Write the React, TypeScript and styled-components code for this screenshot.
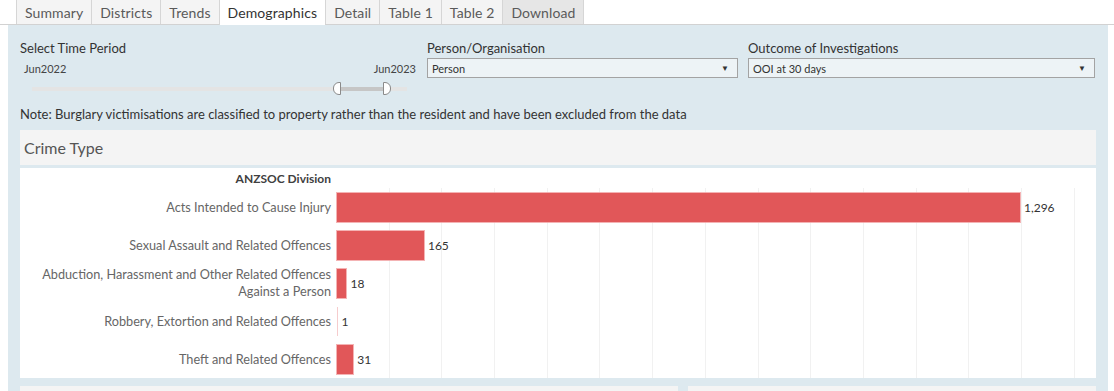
import React from "react";
import styled, { createGlobalStyle } from "styled-components";

const GlobalStyle = createGlobalStyle`
  body {
    margin: 0;
    background: #ffffff;
    font-family: Lato, "Noto Sans", sans-serif;
    overflow: hidden;
  }
`;

const Page = styled.div`
  width: 1114px;
  height: 391px;
  overflow: hidden;
`;

const TabBar = styled.div`
  display: flex;
  height: 24px;
  padding-left: 16px;
  border-bottom: 1px solid #d2d2d2;
`;

const Tab = styled.div<{ $active?: boolean; $dark?: boolean }>`
  display: flex;
  align-items: center;
  padding: 0 8px;
  height: ${(p) => (p.$active ? "25px" : "24px")};
  border-left: 1px solid #d6d6d6;
  border-right: ${(p) => (p.$dark ? "1px solid #d6d6d6" : "none")};
  background: ${(p) => (p.$active ? "#ffffff" : p.$dark ? "#e6e6e6" : "#f4f4f4")};
  color: ${(p) => (p.$active ? "#333333" : "#5a5a5a")};
  font-size: 14px;
  letter-spacing: 0.1px;
  box-sizing: border-box;
`;

const Dashboard = styled.div`
  margin-left: 8px;
  width: 1100px;
  height: 366px;
  box-sizing: border-box;
  padding: 15px 12px 0 12px;
  background: #dde9ef;
  display: flex;
  flex-direction: column;
`;

const Controls = styled.div`
  display: flex;
  height: 66px;
`;

const Control = styled.div<{ $width: number; $gap?: number }>`
  display: flex;
  flex-direction: column;
  width: ${(p) => p.$width}px;
  margin-left: ${(p) => p.$gap || 0}px;
`;

const Label = styled.div`
  font-size: 13px;
  line-height: 16px;
  color: #333333;
`;

const RangeLabels = styled.div`
  display: flex;
  justify-content: space-between;
  padding: 5px 0 0 4px;
  font-size: 11px;
  line-height: 16px;
  color: #444444;
`;

const Track = styled.div`
  display: flex;
  align-items: center;
  height: 13px;
  margin: 5px 0 0 12px;
  width: 375px;
`;

const TrackPart = styled.div<{ $selected?: boolean }>`
  height: 4px;
  background: ${(p) => (p.$selected ? "#c6c6c6" : "#e4e4e4")};
`;

const Handle = styled.div<{ $side: "left" | "right" }>`
  width: 8px;
  height: 13px;
  box-sizing: border-box;
  background: #ffffff;
  border: 1px solid #8a8a8a;
  border-radius: ${(p) => (p.$side === "left" ? "6px 0 0 6px" : "0 6px 6px 0")};
`;

const Select = styled.div`
  display: flex;
  align-items: center;
  justify-content: space-between;
  margin-top: 2px;
  height: 20px;
  box-sizing: border-box;
  border: 1px solid #a3a3a3;
  background: #edf3f6;
  padding: 0 8px 0 4px;
  font-size: 11px;
  color: #333333;
`;

const Arrow = styled.span`
  font-size: 8px;
  color: #333333;
`;

const Note = styled.div`
  font-size: 13px;
  line-height: 16px;
  color: #333333;
`;

const SectionHeader = styled.div`
  margin-top: 8px;
  height: 35px;
  display: flex;
  align-items: center;
  padding-left: 4px;
  background: #f4f4f4;
  font-size: 16px;
  color: #555555;
`;

const Chart = styled.div`
  margin-top: 3px;
  height: 210px;
  background: #ffffff;
  display: grid;
  grid-template-columns: 317px 1fr;
  grid-template-rows: 20px repeat(5, 38px);
`;

const AxisTitle = styled.div`
  display: flex;
  align-items: center;
  justify-content: flex-end;
  padding-right: 6px;
  font-size: 12px;
  font-weight: 700;
  color: #404040;
`;

const RowLabel = styled.div`
  display: flex;
  align-items: center;
  justify-content: flex-end;
  text-align: right;
  padding-right: 6px;
  font-size: 12.7px;
  line-height: 17px;
  color: #666666;
`;

const Plot = styled.div<{ $grid?: boolean }>`
  display: flex;
  align-items: center;
  background: ${(p) =>
    p.$grid
      ? "repeating-linear-gradient(to right, transparent 0 51.7px, #f1f1f1 51.7px 52.7px)"
      : "transparent"};
`;

const Bar = styled.div<{ $tiny?: boolean }>`
  height: 29px;
  background: #e15759;
  box-shadow: ${(p) => (p.$tiny ? "none" : "0 0 0 1px rgba(241, 160, 161, 0.8)")};
  opacity: ${(p) => (p.$tiny ? 0.3 : 1)};
`;

const Value = styled.span`
  margin-left: 4px;
  font-size: 12px;
  color: #333333;
`;

const BottomRow = styled.div`
  display: flex;
  gap: 10px;
  margin-top: 8px;
  flex: 1;
`;

const Panel = styled.div<{ $width: number }>`
  width: ${(p) => p.$width}px;
  background: #f4f4f4;
`;

const tabs = ["Summary", "Districts", "Trends", "Demographics", "Detail", "Table 1", "Table 2", "Download"];

const rows = [
  { label: "Acts Intended to Cause Injury", value: 1296 },
  { label: "Sexual Assault and Related Offences", value: 165 },
  { label: "Abduction, Harassment and Other Related Offences\nAgainst a Person", value: 18 },
  { label: "Robbery, Extortion and Related Offences", value: 1 },
  { label: "Theft and Related Offences", value: 31 },
];

const PX_PER_UNIT = 0.527;

const App: React.FC = () => {
  return (
    <Page>
      <GlobalStyle />
      <TabBar>
        {tabs.map((t) => (
          <Tab key={t} $active={t === "Demographics"} $dark={t === "Download"}>
            {t}
          </Tab>
        ))}
      </TabBar>
      <Dashboard>
        <Controls>
          <Control $width={396}>
            <Label>Select Time Period</Label>
            <RangeLabels>
              <span>Jun2022</span>
              <span>Jun2023</span>
            </RangeLabels>
            <Track>
              <TrackPart style={{ width: 301 }} />
              <Handle $side="left" />
              <TrackPart $selected style={{ width: 42 }} />
              <Handle $side="right" />
              <TrackPart style={{ width: 16 }} />
            </Track>
          </Control>
          <Control $width={311} $gap={11}>
            <Label>Person/Organisation</Label>
            <Select>
              <span>Person</span>
              <Arrow>▼</Arrow>
            </Select>
          </Control>
          <Control $width={347} $gap={10}>
            <Label>Outcome of Investigations</Label>
            <Select>
              <span>OOI at 30 days</span>
              <Arrow>▼</Arrow>
            </Select>
          </Control>
        </Controls>
        <Note>
          Note: Burglary victimisations are classified to property rather than the resident and have been excluded from the data
        </Note>
        <SectionHeader>Crime Type</SectionHeader>
        <Chart>
          <AxisTitle>ANZSOC Division</AxisTitle>
          <Plot />
          {rows.map((r) => (
            <React.Fragment key={r.label}>
              <RowLabel>
                <span>
                  {r.label.split("\n").map((line, i) => (
                    <React.Fragment key={i}>
                      {i > 0 && <br />}
                      {line}
                    </React.Fragment>
                  ))}
                </span>
              </RowLabel>
              <Plot $grid>
                <Bar $tiny={r.value < 5} style={{ width: r.value * PX_PER_UNIT }} />
                <Value>{r.value.toLocaleString("en-US")}</Value>
              </Plot>
            </React.Fragment>
          ))}
        </Chart>
        <BottomRow>
          <Panel $width={658} />
          <Panel $width={408} />
        </BottomRow>
      </Dashboard>
    </Page>
  );
};

export default App;
